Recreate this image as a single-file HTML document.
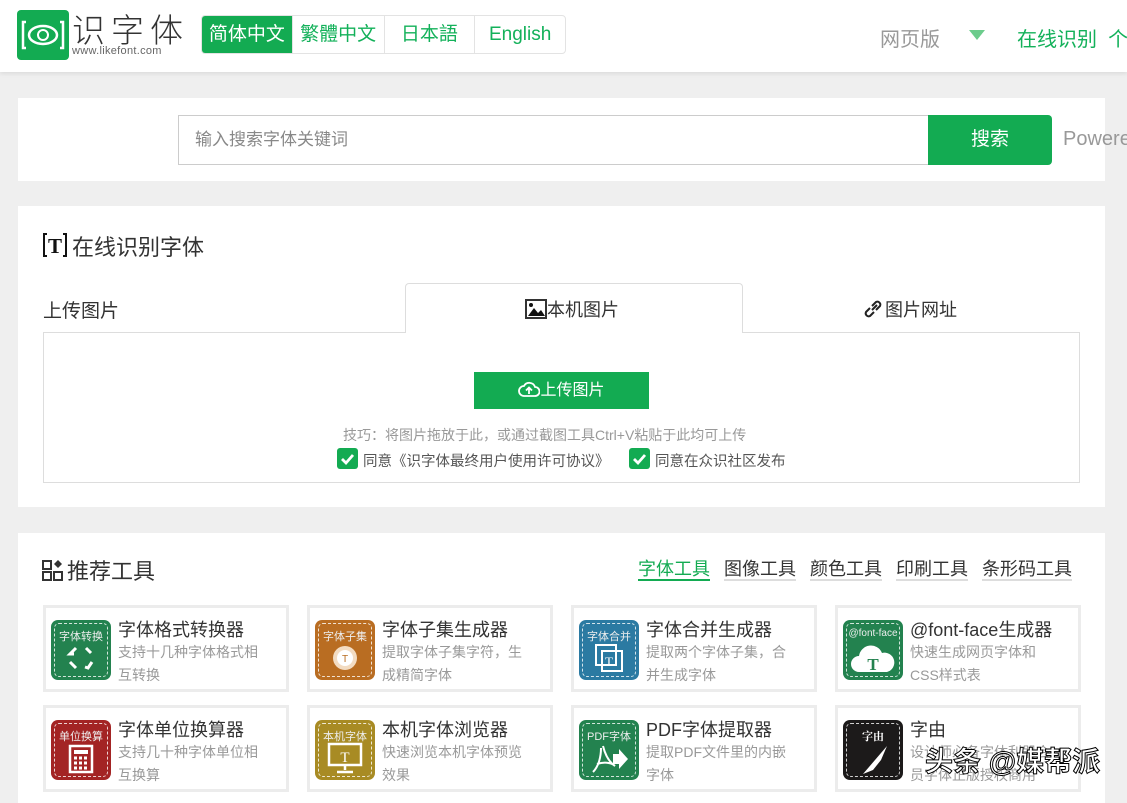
<!DOCTYPE html>
<html><head><meta charset="utf-8"><style>
*{box-sizing:border-box;margin:0;padding:0}
body{width:1127px;height:797px;overflow:hidden;background:#efefef;font-family:"Liberation Sans","Noto Sans CJK SC",sans-serif;position:relative;color:#333}
.abs{position:absolute}
.hdr{left:0;top:0;width:1127px;height:72px;background:#fff;box-shadow:0 2px 4px rgba(0,0,0,.08)}
.panel{background:#fff;left:18px;width:1087px}
.langs{left:201px;top:15px;height:39px;width:365px;border:1px solid #e3e3e3;border-radius:4px;display:flex;overflow:hidden}
.langs div{height:37px;line-height:37px;font-size:19px;color:#13b15a;text-align:center;border-left:1px solid #e3e3e3}
.card{width:246px;height:87px;border:3px solid #ececec;background:#fff}
.card .ic{position:absolute;left:5px;top:12px;width:60px;height:60px;border-radius:7px}
.card .ic:after{content:"";position:absolute;left:3px;top:3px;right:3px;bottom:3px;border:1px dashed rgba(255,255,255,.8);border-radius:5px}
.card .ic span{position:absolute;top:8px;left:0;width:60px;text-align:center;color:#eee;font-size:11px}
.card h4{position:absolute;left:72px;top:8px;font-weight:normal;font-size:18px;color:#333;white-space:nowrap}
.card p{position:absolute;left:72px;top:33px;width:152px;font-size:14px;line-height:23px;color:#999}
.tabs span{margin-left:14px;font-size:18px;color:#333;border-bottom:2px solid #ddd;padding-bottom:0}
</style></head><body>
<div class="abs hdr"></div>
<div class="abs" style="left:17px;top:10px;width:52px;height:50px;background:#13ab52;border-radius:4px">
<svg width="52" height="50" viewBox="0 0 52 50"><path d="M9 12h-3v26h3M43 12h3v26h-3" stroke="#fff" stroke-width="2.5" fill="none"/><ellipse cx="26" cy="25" rx="14" ry="9" stroke="#fff" stroke-width="2.5" fill="none"/><circle cx="26" cy="25" r="5" stroke="#fff" stroke-width="2" fill="none"/></svg></div>
<div class="abs" style="left:72px;top:4px;font-size:33px;color:#333;letter-spacing:6px;font-weight:300">识字体</div>
<div class="abs" style="left:72px;top:45px;font-size:11px;color:#666;letter-spacing:0.3px">www.likefont.com</div>
<div class="abs langs"><div style="width:90px;background:#13ab52;color:#fff;border:none">简体中文</div><div style="width:92px">繁體中文</div><div style="width:91px">日本語</div><div style="width:91px">English</div></div>
<div class="abs" style="left:880px;top:23px;font-size:20px;color:#999">网页版</div>
<div class="abs" style="left:969px;top:30px;width:0;height:0;border-left:8px solid transparent;border-right:8px solid transparent;border-top:10px solid #6ccc8c"></div>
<div class="abs" style="left:1017px;top:23px;font-size:20px;color:#13b15a;white-space:nowrap">在线识别 &nbsp;个</div>

<div class="abs panel" style="top:98px;height:83px"></div>
<div class="abs" style="left:178px;top:115px;width:752px;height:50px;border:1px solid #ccc;border-right:none;font-size:17px;color:#888;line-height:48px;padding-left:16px">输入搜索字体关键词</div>
<div class="abs" style="left:928px;top:115px;width:124px;height:50px;background:#13ab52;border-radius:0 4px 4px 0;color:#fff;font-size:19px;text-align:center;line-height:50px">搜索</div>
<div class="abs" style="left:1063px;top:128px;font-size:20px;color:#999">Powered</div>

<div class="abs panel" style="top:206px;height:301px"></div>
<div class="abs" style="left:42px;top:232px;width:26px;height:26px"><svg width="26" height="26"><path d="M5 2H2v22h3M21 2h3v22h-3" stroke="#111" stroke-width="2" fill="none"/><text x="13" y="21" text-anchor="middle" font-family="Liberation Serif" font-weight="bold" font-size="21" fill="#111">T</text></svg></div>
<div class="abs" style="left:72px;top:230px;font-size:22px;color:#333">在线识别字体</div>
<div class="abs" style="left:43px;top:296px;font-size:19px;color:#333">上传图片</div>
<div class="abs" style="left:43px;top:332px;width:1037px;height:151px;border:1px solid #ddd"></div>
<div class="abs" style="left:405px;top:283px;width:338px;height:50px;border:1px solid #ddd;border-bottom:none;border-radius:4px 4px 0 0;background:#fff"></div>
<div class="abs" style="left:525px;top:296px;font-size:18px;color:#333"><svg width="22" height="20" style="vertical-align:-3px"><rect x="1" y="1" width="20" height="18" fill="none" stroke="#333" stroke-width="2"/><path d="M3 17l6-8 4 5 3-3 4 6z" fill="#111"/><circle cx="6" cy="6" r="2" fill="#111"/></svg>本机图片</div>
<div class="abs" style="left:863px;top:296px;font-size:18px;color:#333"><svg width="22" height="20" style="vertical-align:-3px"><path d="M9 11l5-5M7 9l-4 4a3 3 0 004 4l4-4M13 11l4-4a3 3 0 00-4-4l-4 4" stroke="#222" stroke-width="2" fill="none"/></svg>图片网址</div>
<div class="abs" style="left:474px;top:372px;width:175px;height:37px;background:#13ab52;color:#fff;font-size:16px;text-align:center;line-height:37px"><svg width="22" height="18" style="vertical-align:-3px"><path d="M6 16a5 5 0 010-10 6 6 0 0111 1 4 4 0 010 9z" stroke="#fff" stroke-width="1.8" fill="none"/><path d="M11 14V8M8 10.5l3-3 3 3" stroke="#fff" stroke-width="1.8" fill="none"/></svg>上传图片</div>
<div class="abs" style="left:343px;top:425px;font-size:14px;color:#999">技巧：将图片拖放于此，或通过截图工具Ctrl+V粘贴于此均可上传</div>
<div class="abs" style="left:337px;top:448px;width:21px;height:21px;background:#13ab52;border-radius:3px"><svg width="21" height="21"><path d="M5 11l4 4 7-8" stroke="#fff" stroke-width="2.8" fill="none"/></svg></div>
<div class="abs" style="left:363px;top:450px;font-size:14.5px;color:#555">同意《识字体最终用户使用许可协议》</div>
<div class="abs" style="left:629px;top:448px;width:21px;height:21px;background:#13ab52;border-radius:3px"><svg width="21" height="21"><path d="M5 11l4 4 7-8" stroke="#fff" stroke-width="2.8" fill="none"/></svg></div>
<div class="abs" style="left:655px;top:450px;font-size:14.5px;color:#555">同意在众识社区发布</div>

<div class="abs panel" style="top:533px;height:270px"></div>
<div class="abs" style="left:42px;top:559px"><svg width="22" height="22"><rect x="1" y="2" width="8" height="8" fill="none" stroke="#333" stroke-width="2"/><rect x="1" y="13" width="8" height="8" fill="none" stroke="#333" stroke-width="2"/><rect x="12" y="13" width="8" height="8" fill="none" stroke="#333" stroke-width="2"/><path d="M16 1l4 4-4 4-4-4z" fill="#333"/></svg></div>
<div class="abs" style="left:67px;top:554px;font-size:22px;color:#333">推荐工具</div>
<div class="abs tabs" style="left:624px;top:555px;white-space:nowrap"><span style="color:#13ab52;border-color:#13ab52">字体工具</span><span>图像工具</span><span>颜色工具</span><span>印刷工具</span><span>条形码工具</span></div>

<div class="abs card" style="left:43px;top:605px"><div class="ic" style="background:#23824f"><span>字体转换</span><svg class="abs" style="left:15px;top:24px" width="30" height="28"><path d="M10 4l-6 6 4 0M20 4l5 5M4 18l6 6M26 18l-4 6-3-1" stroke="#fff" stroke-width="3" fill="none"/></svg></div><h4>字体格式转换器</h4><p>支持十几种字体格式相互转换</p></div>
<div class="abs card" style="left:307px;top:605px"><div class="ic" style="background:#b96d22"><span>字体子集</span><svg class="abs" style="left:17px;top:25px" width="26" height="26"><circle cx="13" cy="13" r="12" fill="#f3dcc2"/><circle cx="13" cy="13" r="8" fill="#fff"/><text x="13" y="17" font-size="10" text-anchor="middle" fill="#b96d22">T</text></svg></div><h4>字体子集生成器</h4><p>提取字体子集字符，生成精简字体</p></div>
<div class="abs card" style="left:571px;top:605px"><div class="ic" style="background:#2b7aa2"><span>字体合并</span><svg class="abs" style="left:14px;top:22px" width="32" height="32"><rect x="3" y="3" width="20" height="20" fill="none" stroke="#fff" stroke-width="2"/><rect x="9" y="9" width="20" height="20" fill="none" stroke="#fff" stroke-width="2"/><text x="16" y="24" font-size="13" text-anchor="middle" fill="#fff" font-family="Liberation Serif">T</text></svg></div><h4>字体合并生成器</h4><p>提取两个字体子集，合并生成字体</p></div>
<div class="abs card" style="left:835px;top:605px"><div class="ic" style="background:#23824f"><span style="font-size:10px">@font-face</span><svg class="abs" style="left:6px;top:22px" width="48" height="32"><path d="M10 30a8 8 0 010-16 12 12 0 0123-3 9 9 0 015 19z" fill="#fff"/><text x="24" y="28" font-size="17" font-weight="bold" text-anchor="middle" fill="#23824f" font-family="Liberation Serif">T</text></svg></div><h4>@font-face生成器</h4><p>快速生成网页字体和<br>CSS样式表</p></div>

<div class="abs card" style="left:43px;top:705px"><div class="ic" style="background:#a32424"><span>单位换算</span><svg class="abs" style="left:17px;top:24px" width="26" height="30"><rect x="2" y="2" width="22" height="26" fill="none" stroke="#fff" stroke-width="2.5"/><rect x="6" y="6" width="14" height="4" fill="#fff"/><path d="M6 14h3M11 14h3M16 14h3M6 19h3M11 19h3M16 19h3M6 24h3M11 24h3M16 24h3" stroke="#fff" stroke-width="3"/></svg></div><h4>字体单位换算器</h4><p>支持几十种字体单位相互换算</p></div>
<div class="abs card" style="left:307px;top:705px"><div class="ic" style="background:#a88b24"><span>本机字体</span><svg class="abs" style="left:12px;top:22px" width="36" height="32"><rect x="2" y="2" width="32" height="21" fill="none" stroke="#fff" stroke-width="2.5"/><path d="M18 23v5M10 30h16" stroke="#fff" stroke-width="2.5"/><text x="18" y="20" font-size="15" text-anchor="middle" fill="#fff" font-family="Liberation Serif">T</text></svg></div><h4>本机字体浏览器</h4><p>快速浏览本机字体预览效果</p></div>
<div class="abs card" style="left:571px;top:705px"><div class="ic" style="background:#23824f"><span>PDF字体</span><svg class="abs" style="left:10px;top:22px" width="40" height="34"><path d="M4 30c6-6 8-16 8-24M8 22c6-2 14-2 18 2M14 4c2 8 6 16 12 20" stroke="#fff" stroke-width="2" fill="none"/><path d="M24 12h6v-5l9 10-9 10v-5h-6z" fill="#fff"/></svg></div><h4>PDF字体提取器</h4><p>提取PDF文件里的内嵌<br>字体</p></div>
<div class="abs card" style="left:835px;top:705px"><div class="ic" style="background:#1c1a1a"><span style="font-family:'Noto Serif CJK SC',serif;font-weight:bold;color:#fff">字由</span><svg class="abs" style="left:14px;top:24px" width="32" height="32"><path d="M30 2l-24 28 10-4 8-10z" fill="#fff"/></svg></div><h4>字由</h4><p>设计师必备字体利器会员字体正版授权商用</p></div>
<div class="abs" style="left:925px;top:740px;font-size:28px;font-weight:bold;color:#fff;-webkit-text-stroke:1px #000;white-space:nowrap">头条 @媒帮派</div>
</body></html>
